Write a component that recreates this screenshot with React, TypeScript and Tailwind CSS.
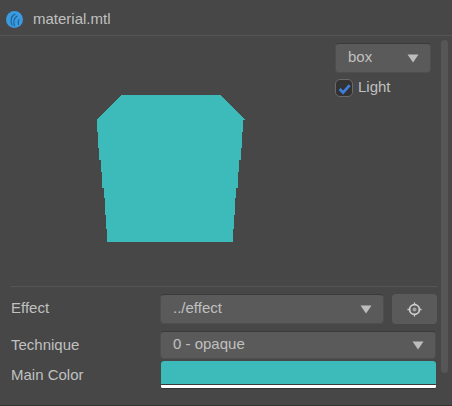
import React from 'react';

// left edge of the preview shape, one [x, bottom y] per stair step
const leftSteps = [
  [1, 37], [2, 53], [3, 65], [5, 77], [6, 93], [8, 103], [9, 120], [10, 134], [11, 147],
];

const shapePath = () => {
  let d = 'M25 0H125L149 25';
  leftSteps.forEach(([x, y]) => {
    d += `H${148 - x}V${y}`;
  });
  d += 'H11';
  [...leftSteps].reverse().forEach(([x], i, all) => {
    const next = all[i + 1];
    d += `H${x}V${next ? next[1] : 25}`;
  });
  return d + 'H0Z';
};

const Caret = ({ className }: { className?: string }) => (
  <svg viewBox="0 0 12 9" className={className}>
    <path d="M0.5 0.5h11L6 8.5z" fill="#bdbdbd" />
  </svg>
);

const Select = ({ label, className }: { label: string; className: string }) => (
  <div
    className={`flex items-center justify-between rounded-[4px] bg-[#5a5a5a] border border-[#4e4e4e] border-t-[#3a3a3a] text-[#c0c0c0] ${className}`}
  >
    <span className="truncate pb-[1px]">{label}</span>
    <Caret className="w-[12px] h-[9px] shrink-0" />
  </div>
);

export default function App() {
  return (
    <div className="w-[452px] h-[406px] flex flex-col bg-[#474747] text-[15px] text-[#c0c0c0] overflow-hidden font-['Liberation_Sans',Arial,sans-serif] border-b border-[#333]">
      {/* Header */}
      <div className="h-[36px] shrink-0 flex items-center gap-[10px] pl-[6px] pt-[3px] border-b border-[#555]">
        <svg viewBox="0 0 17 17" className="w-[17px] h-[17px]">
          <circle cx="8.5" cy="8.5" r="8.5" fill="#3a9be0" />
          <path d="M6 14C4 10 5 5 9 3M8.5 15C7 11 8 7.5 11 5M12.5 13.5C12 11.5 12 10 13 8.5" fill="none" stroke="#1f5f8f" strokeWidth="1.1" strokeLinecap="round" />
        </svg>
        <span>material.mtl</span>
      </div>

      <div className="flex-1 min-h-0 flex">
        <div className="w-[441px] shrink-0 flex flex-col">
          {/* Preview */}
          <div className="h-[250px] shrink-0 flex">
            <div className="w-[335px] shrink-0 pl-[96px] pt-[59px]">
              <svg width="149" height="148" viewBox="0 0 149 148" shapeRendering="crispEdges">
                <path d={shapePath()} fill="#3dbaba" />
              </svg>
            </div>
            <div className="flex flex-col pt-[7px]">
              <Select label="box" className="w-[96px] h-[30px] pl-[12px] pr-[11px]" />
              <label className="flex items-center gap-[5px] mt-[6px] h-[18px]">
                <span className="w-[18px] h-[18px] rounded-[5px] border border-[#6a6a6a] bg-[#333] flex items-center justify-center">
                  <svg viewBox="0 0 12 12" className="w-[13px] h-[13px]">
                    <path d="M1.5 6.5L4.7 9.7L10.8 2.8" fill="none" stroke="#3f7fe0" strokeWidth="2.4" />
                  </svg>
                </span>
                <span className="pb-[1px]">Light</span>
              </label>
            </div>
          </div>

          {/* Properties */}
          <div className="ml-[11px] w-[426px] border-t border-[#555] pt-[7px]">
            <div className="flex items-center h-[30px]">
              <span className="w-[149px] shrink-0 pb-[2px]">Effect</span>
              <Select label="../effect" className="w-[224px] h-[30px] pl-[12px] pr-[11px]" />
              <button className="ml-[8px] w-[45px] h-[30px] rounded-[4px] bg-[#5a5a5a] flex items-center justify-center">
                <svg viewBox="0 0 16 16" className="w-[15px] h-[15px]" fill="none">
                  <circle cx="8" cy="8" r="5.2" stroke="#cfcfcf" strokeWidth="1.8" />
                  <circle cx="8" cy="8" r="2.2" fill="#a0a0a0" />
                  <path d="M8 0.5v2.5M8 13v2.5M0.5 8h2.5M13 8h2.5" stroke="#cfcfcf" strokeWidth="1.4" />
                </svg>
              </button>
            </div>
            <div className="flex items-center h-[28px] mt-[7px]">
              <span className="w-[149px] shrink-0">Technique</span>
              <Select label="0 - opaque" className="w-[276px] h-[28px] pl-[12px] pr-[11px]" />
            </div>
            <div className="flex items-center h-[28px] mt-[2px]">
              <span className="w-[150px] shrink-0">Main Color</span>
              <div className="w-[275px] h-[28px] rounded-[3px] overflow-hidden flex flex-col bg-[#333]">
                <div className="h-[23px] bg-[#3dbaba]" />
                <div className="h-[1px] bg-[#3a3a3a]" />
                <div className="h-[3px] bg-white" />
              </div>
            </div>
          </div>
        </div>

        {/* Scrollbar */}
        <div className="w-[7px] h-[333px] mt-[4px] rounded-full bg-[#565656]" />
      </div>
    </div>
  );
}
